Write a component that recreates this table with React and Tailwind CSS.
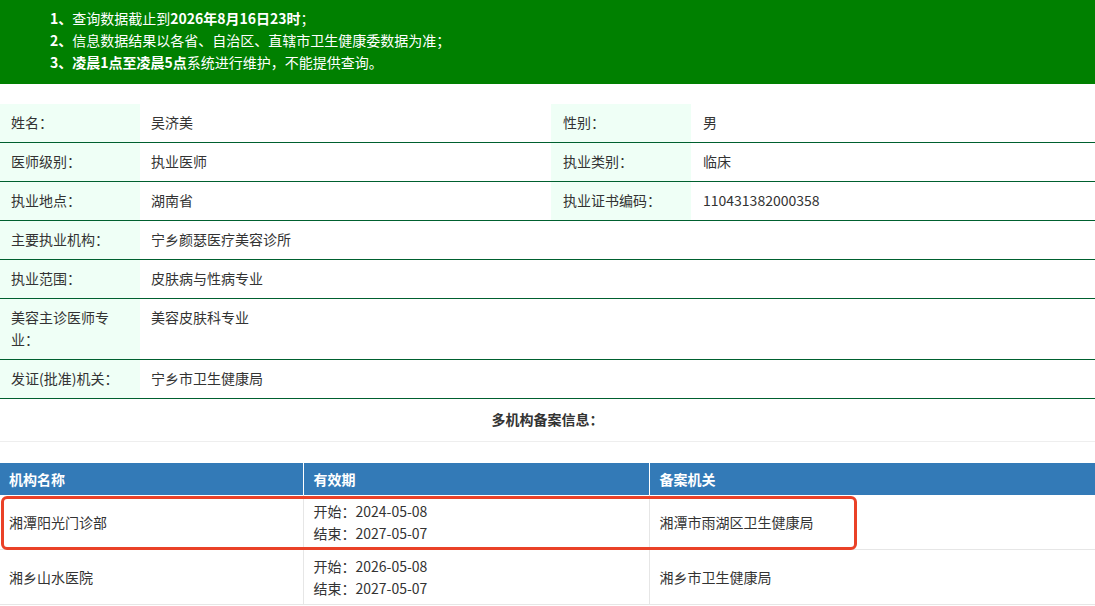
import React from 'react';

const info = [
  [['姓名：', '吴济美'], ['性别：', '男']],
  [['医师级别：', '执业医师'], ['执业类别：', '临床']],
  [['执业地点：', '湖南省'], ['执业证书编码：', '110431382000358']],
];

const wide = [
  ['主要执业机构：', '宁乡颜瑟医疗美容诊所'],
  ['执业范围：', '皮肤病与性病专业'],
  ['美容主诊医师专业：', '美容皮肤科专业'],
  ['发证(批准)机关：', '宁乡市卫生健康局'],
];

const records = [
  { name: '湘潭阳光门诊部', start: '2024-05-08', end: '2027-05-07', org: '湘潭市雨湖区卫生健康局' },
  { name: '湘乡山水医院', start: '2026-05-08', end: '2027-05-07', org: '湘乡市卫生健康局' },
];

const App = () => {
  return (
    <div
      className="w-[1095px] h-[606px] overflow-hidden bg-white text-[14px] leading-[22px] text-[#333]"
      style={{ fontFamily: '"Noto Sans CJK SC", "Noto Sans", sans-serif' }}
    >
      {/* notice banner */}
      <div className="bg-[#008000] text-white pl-[50px] pt-[7px] pb-[11px]">
        <div><b>1、</b>查询数据截止到<b>2026年8月16日23时</b>；</div>
        <div><b>2、</b>信息数据结果以各省、自治区、直辖市卫生健康委数据为准；</div>
        <div><b>3、</b><b>凌晨1点至凌晨5点</b>系统进行维护，不能提供查询。</div>
      </div>

      {/* doctor info */}
      <table className="mt-[20px] w-full table-fixed border-collapse">
        <colgroup>
          <col className="w-[140px]" />
          <col className="w-[411px]" />
          <col className="w-[140px]" />
          <col />
        </colgroup>
        <tbody>
          {info.map((row, i) => (
            <tr key={i} className="border-b border-[#00602f]">
              <td className="bg-[#effff6] pl-[11px] pt-[7px] pb-[9px] align-top">{row[0][0]}</td>
              <td className="pl-[11px] pt-[7px] pb-[9px] align-top">{row[0][1]}</td>
              <td className="bg-[#effff6] pl-3 pt-[7px] pb-[9px] align-top">{row[1][0]}</td>
              <td className="pl-3 pt-[7px] pb-[9px] align-top">{row[1][1]}</td>
            </tr>
          ))}
          {wide.map(([k, v], i) => (
            <tr key={i} className="border-b border-[#00602f]">
              <td className="bg-[#effff6] pl-[11px] pr-3 pt-[7px] pb-[9px] align-top">{k}</td>
              <td colSpan={3} className="pl-[11px] pt-[7px] pb-[9px] align-top">{v}</td>
            </tr>
          ))}
        </tbody>
      </table>

      <div className="text-center font-bold pt-[9px] pb-[11px] border-b border-[#eeeeee]">多机构备案信息：</div>

      {/* multi-institution records */}
      <div className="relative mt-[21px]">
        <table className="w-full table-fixed border-collapse">
          <colgroup>
            <col className="w-[303px]" />
            <col className="w-[346px]" />
            <col />
          </colgroup>
          <thead>
            <tr className="bg-[#337ab7] text-white font-bold">
              <th className="text-left pl-[9px] py-[5px] border-r border-white">机构名称</th>
              <th className="text-left pl-[10px] py-[5px] border-r border-white">有效期</th>
              <th className="text-left pl-[10px] py-[5px]">备案机关</th>
            </tr>
          </thead>
          <tbody>
            {records.map(r => (
              <tr key={r.name} className="border-b border-[#e6e6e6]">
                <td className="pl-[9px] py-[5px] border-r border-[#e6e6e6] align-middle">{r.name}</td>
                <td className="pl-[10px] py-[5px] border-r border-[#e6e6e6] align-middle">
                  <div>开始：{r.start}</div>
                  <div>结束：{r.end}</div>
                </td>
                <td className="pl-[10px] py-[5px] align-middle">{r.org}</td>
              </tr>
            ))}
          </tbody>
        </table>
        {/* highlight around first record */}
        <div className="absolute left-[1px] top-[33px] w-[856px] h-[54px] border-[3px] border-[#ea4127] rounded-[6px] pointer-events-none" />
      </div>
    </div>
  );
};

export default App;
